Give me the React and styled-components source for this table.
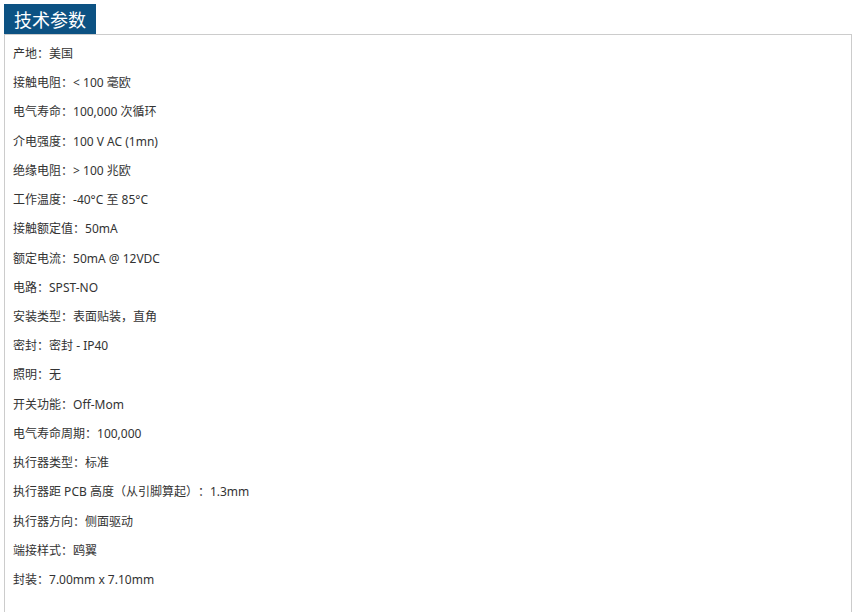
import styled, { createGlobalStyle } from "styled-components";

const GlobalStyle = createGlobalStyle`
  html, body {
    margin: 0;
    padding: 0;
    background: #fff;
  }
  body {
    font-family: "Noto Sans", "Noto Sans CJK SC", sans-serif;
    text-spacing-trim: space-all;
  }
`;

const Section = styled.section`
  padding: 4px 1px 0 4px;
`;

const TabTitle = styled.h2`
  display: inline-block;
  margin: 0;
  height: 30px;
  padding: 0 10px;
  background-color: #0c5283;
  color: #fff;
  font-family: "Noto Sans CJK SC", sans-serif;
  font-size: 18px;
  font-weight: 400;
  line-height: 30px;
  vertical-align: top;
`;

const Panel = styled.div`
  border: 1px solid #cccccc;
  border-bottom: none;
  padding: 4px 8px 30px;
  min-height: 540px;
`;

const SpecRow = styled.p`
  margin: 0;
  height: 29.22px;
  line-height: 29.22px;
  font-size: 12px;
  color: #333;
  white-space: nowrap;
`;

const specs = [
  ["产地", "美国"],
  ["接触电阻", "< 100 毫欧"],
  ["电气寿命", "100,000 次循环"],
  ["介电强度", "100 V AC (1mn)"],
  ["绝缘电阻", "> 100 兆欧"],
  ["工作温度", "-40°C 至 85°C"],
  ["接触额定值", "50mA"],
  ["额定电流", "50mA @ 12VDC"],
  ["电路", "SPST-NO"],
  ["安装类型", "表面贴装，直角"],
  ["密封", "密封 - IP40"],
  ["照明", "无"],
  ["开关功能", "Off-Mom"],
  ["电气寿命周期", "100,000"],
  ["执行器类型", "标准"],
  ["执行器距 PCB 高度（从引脚算起）", "1.3mm"],
  ["执行器方向", "侧面驱动"],
  ["端接样式", "鸥翼"],
  ["封装", "7.00mm x 7.10mm"],
];

export default function App() {
  return (
    <>
      <GlobalStyle />
      <Section>
        <TabTitle>技术参数</TabTitle>
        <Panel>
          {specs.map(([label, value]) => (
            <SpecRow key={label}>
              {label}：{value}
            </SpecRow>
          ))}
        </Panel>
      </Section>
    </>
  );
}
